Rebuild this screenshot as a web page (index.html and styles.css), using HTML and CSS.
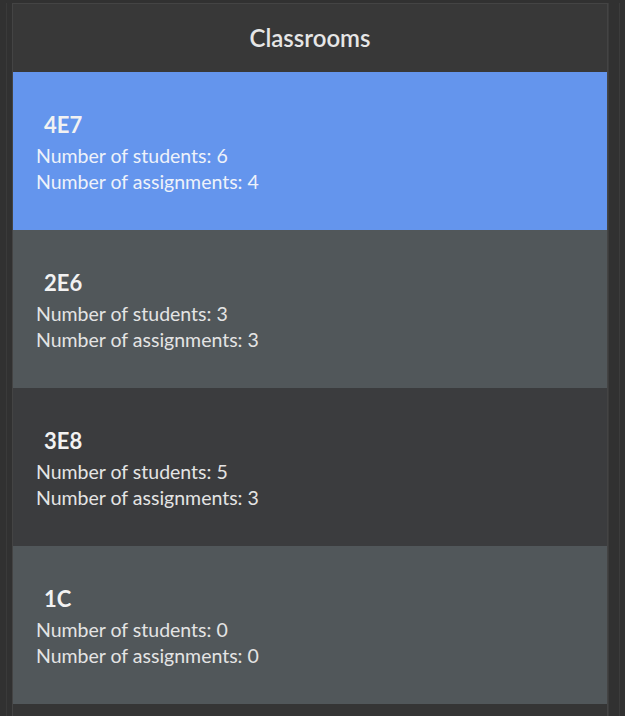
FILE: index.html
```html
<!DOCTYPE html>
<html lang="en">
<head>
<meta charset="utf-8">
<title>Classrooms</title>
<link rel="stylesheet" href="styles.css">
</head>
<body>
<div class="stage">
  <div class="gutter-left"></div>
  <div class="panel">
    <div class="header">Classrooms</div>
    <ul class="list">
      <li class="item selected">
        <div class="title">4E7</div>
        <div class="line">Number of students: 6</div>
        <div class="line">Number of assignments: 4</div>
      </li>
      <li class="item even">
        <div class="title">2E6</div>
        <div class="line">Number of students: 3</div>
        <div class="line">Number of assignments: 3</div>
      </li>
      <li class="item odd">
        <div class="title">3E8</div>
        <div class="line">Number of students: 5</div>
        <div class="line">Number of assignments: 3</div>
      </li>
      <li class="item even">
        <div class="title">1C</div>
        <div class="line">Number of students: 0</div>
        <div class="line">Number of assignments: 0</div>
      </li>
    </ul>
  </div>
  <div class="gutter-right"></div>
</div>
</body>
</html>
```

FILE: styles.css
```css
html, body {
  margin: 0;
  padding: 0;
  height: 100%;
  background: #313131;
  overflow: hidden;
}

.stage {
  display: flex;
  height: 100%;
  padding-top: 3px;
  box-sizing: border-box;
  font-family: "Lato", "Noto Sans", sans-serif;
}

.gutter-left {
  flex: 0 0 6px;
  margin-left: 6px;
  border-left: 1px solid #3a3a3a;
  box-sizing: border-box;
}

.gutter-right {
  flex: 0 0 12px;
  border-left: 1px solid #3c3c3c;
  border-right: 1px solid #3c3c3c;
  box-sizing: border-box;
}

.panel {
  flex: 0 0 596px;
  border: 1px solid #444444;
  border-bottom: none;
  background: #353535;
  display: flex;
  flex-direction: column;
  box-sizing: border-box;
}

.header {
  height: 68px;
  background: #383838;
  color: #e6e6e6;
  font-size: 24px;
  font-weight: 600;
  display: flex;
  align-items: center;
  justify-content: center;
  padding-bottom: 2px;
  box-sizing: border-box;
}

.list {
  list-style: none;
  margin: 0;
  padding: 0;
}

.item {
  height: 158px;
  padding: 4px 23px 0;
  display: flex;
  flex-direction: column;
  justify-content: center;
  color: #e4e4e4;
  box-sizing: border-box;
}

.item.selected {
  background: #6495ed;
  color: #eef2fa;
}

.item.even {
  background: #51575a;
}

.item.odd {
  background: #3b3c3e;
}

.title {
  font-size: 22px;
  font-weight: 700;
  color: #f2f2f2;
  padding-left: 8px;
  line-height: 28px;
  margin-bottom: 4px;
}

.line {
  font-size: 19.5px;
  line-height: 26px;
}
```
